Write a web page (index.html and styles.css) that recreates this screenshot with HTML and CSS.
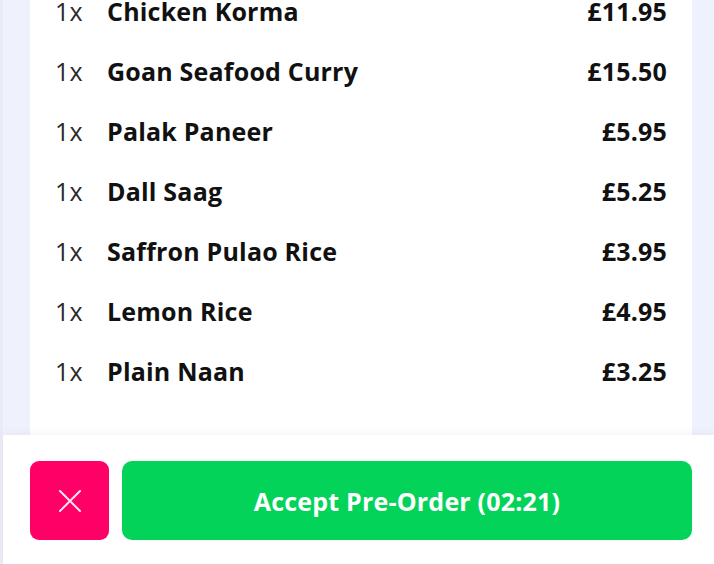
FILE: index.html
```html
<!DOCTYPE html>
<html>
<head>
<meta charset="utf-8">
<link rel="stylesheet" href="styles.css">
</head>
<body>
<div class="app">
  <div class="scroll">
    <div class="card">
      <ul class="items">
        <li class="item"><span class="qty">1x</span><span class="name">Chicken Korma</span><span class="price">£11.95</span></li>
        <li class="item"><span class="qty">1x</span><span class="name">Goan Seafood Curry</span><span class="price">£15.50</span></li>
        <li class="item"><span class="qty">1x</span><span class="name">Palak Paneer</span><span class="price">£5.95</span></li>
        <li class="item"><span class="qty">1x</span><span class="name">Dall Saag</span><span class="price">£5.25</span></li>
        <li class="item"><span class="qty">1x</span><span class="name">Saffron Pulao Rice</span><span class="price">£3.95</span></li>
        <li class="item"><span class="qty">1x</span><span class="name">Lemon Rice</span><span class="price">£4.95</span></li>
        <li class="item"><span class="qty">1x</span><span class="name">Plain Naan</span><span class="price">£3.25</span></li>
      </ul>
    </div>
  </div>
  <div class="footer">
    <button class="btn-reject" aria-label="Reject">
      <svg width="24" height="24" viewBox="0 0 24 24"><path d="M2 2 L22 22 M22 2 L2 22" stroke="#ffe6f0" stroke-width="2" stroke-linecap="round" fill="none"/></svg>
    </button>
    <button class="btn-accept">Accept Pre-Order (02:21)</button>
  </div>
</div>
</body>
</html>
```
FILE: styles.css
```css
* { box-sizing: border-box; }
html, body { margin: 0; padding: 0; }
body {
  width: 714px;
  height: 564px;
  overflow: hidden;
  font-family: "Open Sans", "Noto Sans", sans-serif;
  background: #ffffff;
}
.app {
  height: 564px;
  display: flex;
  flex-direction: column;
  border-left: 3px solid #ebebf7;
}
.scroll {
  height: 435px;
  flex: none;
  overflow: hidden;
  background: #eff1fd;
  padding: 0 22px 0 27px;
}
.card {
  background: #ffffff;
  height: 100%;
  padding: 0 25px;
  display: flow-root;
}
.items {
  list-style: none;
  margin: -19px 0 0 0;
  padding: 0;
}
.item {
  height: 60px;
  display: flex;
  align-items: center;
  color: #111111;
  font-size: 25px;
  letter-spacing: 0.2px;
}
.qty {
  width: 52px;
  font-weight: 400;
  color: #2a2a2a;
}
.name {
  flex: 1;
  font-weight: 700;
}
.price {
  font-weight: 700;
}
.footer {
  flex: 1;
  display: flex;
  gap: 13px;
  padding: 26px 22px 0 27px;
  background: #ffffff;
  box-shadow: 0 -3px 8px rgba(0, 0, 0, 0.04);
  align-items: flex-start;
}
button {
  border: none;
  font-family: inherit;
  cursor: pointer;
}
.btn-reject {
  width: 79px;
  height: 79px;
  background: #ff0066;
  border-radius: 9px;
  display: flex;
  align-items: center;
  justify-content: center;
  padding: 0;
}
.btn-accept {
  flex: 1;
  height: 79px;
  background: #04d35a;
  border-radius: 10px;
  color: #ffffff;
  font-size: 25px;
  font-weight: 700;
  letter-spacing: 0.2px;
}
```
